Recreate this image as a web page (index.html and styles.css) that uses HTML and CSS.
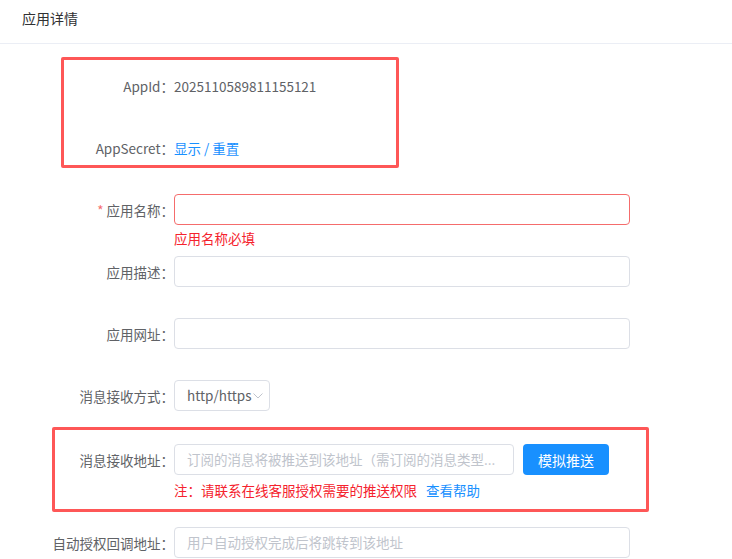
FILE: index.html
```html
<!DOCTYPE html>
<html lang="zh-CN">
<head>
<meta charset="utf-8">
<title>应用详情</title>
<link rel="stylesheet" href="styles.css">
</head>
<body>
<div class="page">
  <div class="header">应用详情</div>
  <div class="form">
    <div class="row">
      <div class="label">AppId：</div>
      <div class="content text-value">2025110589811155121</div>
    </div>
    <div class="row">
      <div class="label">AppSecret：</div>
      <div class="content"><a class="link">显示</a><span class="slash"> / </span><a class="link">重置</a></div>
    </div>
    <div class="row">
      <div class="label"><span class="star">*</span> 应用名称：</div>
      <div class="content">
        <div class="input input-error wide"></div>
        <div class="error">应用名称必填</div>
      </div>
    </div>
    <div class="row">
      <div class="label">应用描述：</div>
      <div class="content"><div class="input wide"></div></div>
    </div>
    <div class="row">
      <div class="label">应用网址：</div>
      <div class="content"><div class="input wide"></div></div>
    </div>
    <div class="row row-select">
      <div class="label">消息接收方式：</div>
      <div class="content">
        <div class="input select"><span>http/https</span>
          <svg class="chev" width="10" height="6" viewBox="0 0 10 6"><path d="M0.5 0.5 L5 5 L9.5 0.5" fill="none" stroke="#c0c4cc" stroke-width="1"/></svg>
        </div>
      </div>
    </div>
    <div class="row row-note">
      <div class="label">消息接收地址：</div>
      <div class="content">
        <div class="inline">
          <div class="input mid"><span class="ph">订阅的消息将被推送到该地址（需订阅的消息类型...</span></div>
          <button class="btn">模拟推送</button>
        </div>
        <div class="note">注：请联系在线客服授权需要的推送权限<a class="link help">查看帮助</a></div>
      </div>
    </div>
    <div class="row">
      <div class="label">自动授权回调地址：</div>
      <div class="content"><div class="input wide"><span class="ph">用户自动授权完成后将跳转到该地址</span></div></div>
    </div>
  </div>
  <div class="mark mark-1"></div>
  <div class="mark mark-2"></div>
</div>
</body>
</html>
```
FILE: styles.css
```css
* { box-sizing: border-box; }
html, body { margin: 0; padding: 0; background: #fff; }
body {
  font-family: "Noto Sans CJK SC", "Noto Sans", sans-serif;
  font-size: 13.5px;
  color: #606266;
  width: 732px;
  height: 559px;
  overflow: hidden;
}
.page { position: relative; width: 732px; height: 559px; }
.header {
  height: 44px;
  line-height: 36px;
  padding-left: 22px;
  font-size: 14px;
  color: #303133;
  border-bottom: 1px solid #ebeef5;
}
.form { padding-top: 26px; }
.row {
  display: flex;
  align-items: flex-start;
  margin-bottom: 30px;
}
.label {
  width: 174px;
  flex: none;
  text-align: right;
  height: 32px;
  line-height: 32px;
  color: #606266;
  white-space: nowrap;
}
.star { color: #f56c6c; }
.content { position: relative; min-height: 32px; line-height: 32px; }
.text-value { color: #606266; }
.link { color: #1890ff; text-decoration: none; cursor: pointer; }
.slash { color: #1890ff; }
.input {
  height: 31px;
  border: 1px solid #dcdfe6;
  border-radius: 4px;
  background: #fff;
  padding: 0 12px;
  line-height: 29px;
  overflow: hidden;
  white-space: nowrap;
}
.wide { width: 456px; }
.mid { width: 340px; }
.input-error { border-color: #f56c6c; }
.ph { color: #c0c4cc; }
.error {
  position: absolute;
  left: 0;
  top: 34px;
  line-height: 20px;
  color: #f5222d;
  white-space: nowrap;
}
.select {
  width: 96px;
  display: flex;
  align-items: center;
  padding: 0 0 0 12px;
  color: #606266;
}
.chev { margin-left: 1px; margin-top: 1px; }
.row-select { margin-bottom: 32px; }
.inline { display: flex; align-items: center; gap: 9px; }
.btn {
  width: 86px;
  height: 31px;
  border: 0;
  border-radius: 4px;
  background: #1890ff;
  color: #fff;
  font-family: inherit;
  font-size: 14px;
  padding: 0;
}
.row-note { margin-bottom: 26px; }
.note {
  line-height: 22px;
  height: 22px;
  margin-top: 4px;
  color: #f5222d;
  white-space: nowrap;
}
.help { margin-left: 9px; }
.mark {
  position: absolute;
  border: 3px solid #fe5757;
  border-radius: 2px;
  pointer-events: none;
}
.mark-1 { left: 61px; top: 57px; width: 338px; height: 111px; }
.mark-2 { left: 52px; top: 427px; width: 597px; height: 85px; }
```
